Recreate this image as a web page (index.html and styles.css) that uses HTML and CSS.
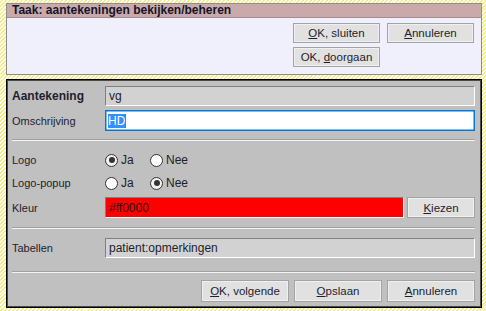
FILE: index.html
```html
<!DOCTYPE html>
<html>
<head>
<meta charset="utf-8">
<link rel="stylesheet" href="styles.css">
</head>
<body>
<div class="task">
  <div class="task-title">Taak: aantekeningen bekijken/beheren</div>
  <div class="task-buttons">
    <button class="btn"><u>O</u>K, sluiten</button>
    <button class="btn"><u>A</u>nnuleren</button>
    <button class="btn">OK, <u>d</u>oorgaan</button>
  </div>
</div>
<div class="form">
  <div class="row r1">
    <div class="label bold">Aantekening</div>
    <div class="field ro">vg</div>
  </div>
  <div class="row r2">
    <div class="label">Omschrijving</div>
    <div class="field focus"><span class="sel">HD</span></div>
  </div>
  <div class="sep s1"></div>
  <div class="row r3">
    <div class="label">Logo</div>
    <div class="radios">
      <span class="radio on"></span><span class="rlabel">Ja</span>
      <span class="radio"></span><span class="rlabel">Nee</span>
    </div>
  </div>
  <div class="row r4">
    <div class="label">Logo-popup</div>
    <div class="radios">
      <span class="radio"></span><span class="rlabel">Ja</span>
      <span class="radio on"></span><span class="rlabel">Nee</span>
    </div>
  </div>
  <div class="row r5">
    <div class="label">Kleur</div>
    <div class="field red">#ff0000</div>
    <button class="btn kiezen"><u>K</u>iezen</button>
  </div>
  <div class="sep s2"></div>
  <div class="row r6">
    <div class="label">Tabellen</div>
    <div class="field ro">patient:opmerkingen</div>
  </div>
  <div class="sep s3"></div>
  <div class="actions">
    <button class="btn act"><u>O</u>K, volgende</button>
    <button class="btn act"><u>O</u>pslaan</button>
    <button class="btn act"><u>A</u>nnuleren</button>
  </div>
</div>
</body>
</html>
```

FILE: styles.css
```css
html, body {
  margin: 0;
  height: 100%;
}
body {
  background: repeating-linear-gradient(135deg, #ffffff 0 1.4px, #f6ee80 1.4px 2.8px);
  font-family: "Liberation Sans", Arial, sans-serif;
  font-size: 11px;
  color: #1e1e2c;
  padding: 3px 4px 0 6px;
  box-sizing: border-box;
  overflow: hidden;
}
.task {
  height: 72px;
  box-sizing: border-box;
  border: 1px solid #8e8e8e;
  background: #f0f0fc;
}
.task-title {
  height: 13px;
  line-height: 13px;
  background: #c9a9a9;
  border-bottom: 1px solid #a58c8c;
  font-weight: bold;
  font-size: 12px;
  padding-left: 5px;
  color: #15152a;
}
.task-buttons {
  display: grid;
  grid-template-columns: 87px 87px;
  grid-auto-rows: 20px;
  gap: 4px 7px;
  justify-content: end;
  padding: 5px 7px 0 0;
}
.btn {
  font-family: inherit;
  font-size: 11.5px;
  color: #1e1e2c;
  background: #e1e1e1;
  border: 1px solid #a3a3a3;
  box-shadow: inset 0 0 0 1px #f0f0f0;
  padding: 0;
  margin: 0;
}
.form {
  margin-top: 4px;
  height: 229px;
  box-sizing: border-box;
  border: 1px solid #000;
  box-shadow: inset 0 0 0 1px #4a4a4a;
  background: #c0c0c0;
  padding: 6px 6px 0 5px;
}
.row {
  display: flex;
  align-items: center;
}
.label {
  width: 93px;
  flex: none;
}
.bold {
  font-weight: bold;
  font-size: 12px;
}
.field {
  flex: 1;
  height: 100%;
  box-sizing: border-box;
  display: flex;
  align-items: center;
  padding-left: 3px;
  font-size: 12px;
}
.ro {
  background: #d2d2d2;
  border: 1px solid;
  border-color: #808080 #ffffff #ffffff #808080;
}
.focus {
  background: #fff;
  border: 1px solid #0078d7;
  box-shadow: inset 0 0 0 0.5px #0078d7;
  padding-left: 2px;
}
.sel {
  background: #3390ff;
  color: #fff;
  border-right: 1px solid #c06020;
}
.red {
  background: #ff0000;
  border: 1px solid;
  border-color: #808080 #ffffff #ffffff #808080;
  color: #2a1010;
}
.r1 { height: 20px; }
.r2 { height: 21px; margin-top: 4px; }
.r3 { height: 20px; margin-top: 9px; }
.r4 { height: 20px; margin-top: 3px; }
.r5 { height: 21px; margin-top: 4px; }
.r6 { height: 20px; margin-top: 9px; }
.sep {
  height: 1px;
  background: #a0a0a0;
  border-bottom: 1px solid #f4f4f4;
}
.s1 { margin-top: 8px; }
.s2 { margin-top: 9px; }
.s3 { margin-top: 13px; }
.radios {
  display: flex;
  align-items: center;
}
.radio {
  width: 13px;
  height: 13px;
  border: 1px solid #333;
  border-radius: 50%;
  background: #fff;
  box-sizing: border-box;
  position: relative;
  flex: none;
}
.radio.on {
  background: #f2f2f2;
}
.radio.on::after {
  content: "";
  position: absolute;
  left: 2.5px;
  top: 2.5px;
  width: 6px;
  height: 6px;
  border-radius: 50%;
  background: #333;
}
.rlabel {
  margin-left: 3px;
  width: 29px;
  font-size: 12px;
}
.kiezen {
  width: 68px;
  height: 21px;
  margin-left: 3px;
  flex: none;
}
.actions {
  display: flex;
  justify-content: flex-end;
  gap: 5px;
  margin-top: 7px;
}
.act {
  width: 88px;
  height: 22px;
}
```
